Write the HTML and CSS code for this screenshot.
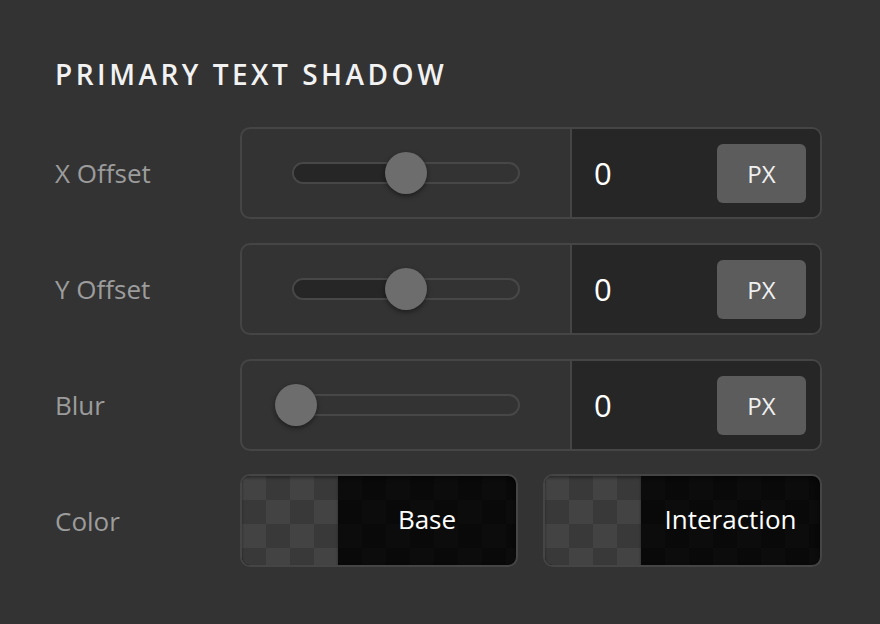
FILE: index.html
```html
<!DOCTYPE html>
<html>
<head>
<meta charset="utf-8">
<link rel="stylesheet" href="styles.css">
</head>
<body>
<div class="panel">
  <h1 class="title">PRIMARY TEXT SHADOW</h1>
  <div class="rows">
    <div class="label">X Offset</div>
    <div class="control">
      <div class="slider-area">
        <div class="track">
          <div class="fill" style="width:50%"></div>
          <div class="thumb" style="left:50%"></div>
        </div>
      </div>
      <div class="value-area">
        <span class="value">0</span>
        <span class="unit">PX</span>
      </div>
    </div>

    <div class="label">Y Offset</div>
    <div class="control">
      <div class="slider-area">
        <div class="track">
          <div class="fill" style="width:50%"></div>
          <div class="thumb" style="left:50%"></div>
        </div>
      </div>
      <div class="value-area">
        <span class="value">0</span>
        <span class="unit">PX</span>
      </div>
    </div>

    <div class="label">Blur</div>
    <div class="control">
      <div class="slider-area">
        <div class="track">
          <div class="fill" style="width:0%"></div>
          <div class="thumb" style="left:1%"></div>
        </div>
      </div>
      <div class="value-area">
        <span class="value">0</span>
        <span class="unit">PX</span>
      </div>
    </div>

    <div class="label">Color</div>
    <div class="colors">
      <div class="swatch">
        <div class="checker"></div>
        <div class="swatch-name">Base</div>
      </div>
      <div class="swatch">
        <div class="checker"></div>
        <div class="swatch-name">Interaction</div>
      </div>
    </div>
  </div>
</div>
</body>
</html>
```
FILE: styles.css
```css
html, body {
  margin: 0;
  padding: 0;
  background: #333333;
}
body {
  font-family: "Open Sans", "Noto Sans", sans-serif;
  width: 880px;
  height: 624px;
  overflow: hidden;
}
.panel {
  padding: 58px 0 0 55px;
}
.title {
  margin: 0;
  font-size: 28px;
  line-height: 32px;
  font-weight: 600;
  letter-spacing: 3.5px;
  color: #f2f2f2;
}
.rows {
  margin-top: 37px;
  display: grid;
  grid-template-columns: 185px 582px;
  grid-auto-rows: 92px;
  row-gap: 24px;
  align-items: center;
}
.label {
  font-size: 26px;
  color: #9c9c9c;
  line-height: 32px;
}
.control {
  height: 92px;
  box-sizing: border-box;
  border: 2px solid #454545;
  border-radius: 10px;
  display: grid;
  grid-template-columns: 330px 1fr;
  overflow: hidden;
}
.slider-area {
  border-right: 2px solid #454545;
  display: flex;
  align-items: center;
  justify-content: center;
}
.track {
  position: relative;
  width: 228px;
  height: 22px;
  box-sizing: border-box;
  border: 2px solid #474747;
  border-radius: 11px;
  background: #333333;
}
.fill {
  height: 100%;
  background: #262626;
  border-radius: 9px 0 0 9px;
}
.thumb {
  position: absolute;
  top: 50%;
  width: 42px;
  height: 42px;
  margin: -21px 0 0 -21px;
  border-radius: 50%;
  background: #6d6d6d;
  box-shadow: 0 2px 5px rgba(0, 0, 0, 0.45);
}
.value-area {
  background: #262626;
  display: flex;
  align-items: center;
  justify-content: space-between;
  padding: 0 14px 0 22px;
}
.value {
  font-size: 31px;
  color: #ffffff;
  line-height: 36px;
}
.unit {
  width: 89px;
  height: 59px;
  border-radius: 6px;
  background: #5c5c5c;
  color: #f0f0f0;
  font-size: 24px;
  display: flex;
  align-items: center;
  justify-content: center;
  margin-top: 1px;
}
.colors {
  display: grid;
  grid-template-columns: 278px 279px;
  column-gap: 25px;
  height: 93px;
  margin-top: -2px;
}
.swatch {
  box-sizing: border-box;
  border: 2px solid #454545;
  border-radius: 10px;
  overflow: hidden;
  display: grid;
  grid-template-columns: 96px 1fr;
  position: relative;
  background: conic-gradient(#090909 25%, #0c0c0c 0 50%, #090909 0 75%, #0c0c0c 0) 0 0 / 48px 48px;
  box-shadow: inset 0 2px 4px rgba(0, 0, 0, 0.5);
}
.checker {
  background: conic-gradient(#393939 25%, #434343 0 50%, #393939 0 75%, #434343 0) 0 0 / 48px 48px;
  box-shadow: inset 0 2px 3px rgba(0, 0, 0, 0.35);
}
.swatch-name {
  display: flex;
  align-items: center;
  justify-content: center;
  color: #ffffff;
  font-size: 26px;
  padding-bottom: 2px;
}
```
